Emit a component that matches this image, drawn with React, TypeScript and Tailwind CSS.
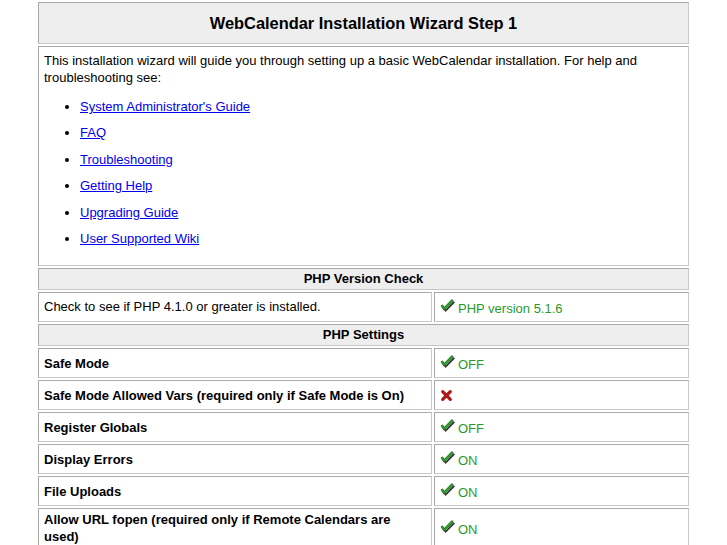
import React from "react";

function Check() {
  return (
    <svg width="15" height="14" viewBox="0 0 15 14" className="inline-block shrink-0 -mt-[3px]">
      <path d="M1.5 7.5 L4.5 12 L14 2.5 L12.5 1.3 L4.6 9.4 L3.2 6.6 Z" fill="#333" transform="translate(1 1)" />
      <path d="M1 6.8 L4 11.2 L13.3 1.8 L11.8 0.6 L4.1 8.6 L2.7 5.9 Z" fill="#22b422" stroke="#0a4f0a" strokeWidth="0.7" strokeLinejoin="round" />
    </svg>
  );
}

function Cross() {
  return (
    <svg width="13" height="13" viewBox="0 0 12 12" className="inline-block shrink-0">
      <path d="M2.5 2.5 L9.5 9.5 M9.5 2.5 L2.5 9.5" stroke="#b01818" strokeWidth="3" strokeLinecap="round" />
    </svg>
  );
}

const cell = "border border-t-[#a8a8a8] border-l-[#a8a8a8] border-r-[#c8c8c8] border-b-[#c8c8c8]";

function Section({ title }: { title: string }) {
  return (
    <div className={`${cell} col-span-2 bg-[#eeeeee] h-[22px] flex items-center justify-center font-bold`}>
      {title}
    </div>
  );
}

function Row({ label, ok, value, tall }: { label: string; ok: boolean; value?: string; tall?: boolean }) {
  return (
    <>
      <div className={`${cell} ${tall ? "h-[40px]" : "h-[30px]"} flex items-center px-[5px] font-bold leading-[17px]`}>
        {label}
      </div>
      <div className={`${cell} flex items-center gap-[3px] px-[5px]`}>
        {ok ? <Check /> : <Cross />}
        {value && <span className="text-[#2a9a2a] mt-[4px]">{value}</span>}
      </div>
    </>
  );
}

const links = [
  "System Administrator's Guide",
  "FAQ",
  "Troubleshooting",
  "Getting Help",
  "Upgrading Guide",
  "User Supported Wiki",
];

export default function App() {
  return (
    <div className="min-h-[545px] bg-white pt-[2px] text-[13px] text-black" style={{ fontFamily: '"Liberation Sans", Arial, sans-serif' }}>
      <div className="ml-[38px] w-[651px] grid grid-cols-[394px_255px] gap-[2px]">
        <div className={`${cell} col-span-2 bg-[#eeeeee] h-[42px] flex items-center justify-center font-bold text-[16.4px]`}>
          WebCalendar Installation Wizard Step 1
        </div>
        <div className={`${cell} col-span-2 h-[220px] px-[5px] pt-[5px] leading-[17px]`}>
          <p>
            This installation wizard will guide you through setting up a basic WebCalendar installation. For help and
            troubleshooting see:
          </p>
          <ul className="list-disc pl-[36px] mt-[12px] flex flex-col gap-[9.4px]">
            {links.map((l) => (
              <li key={l}>
                <a href="#" className="text-[#0000ee] underline">{l}</a>
              </li>
            ))}
          </ul>
        </div>
        <Section title="PHP Version Check" />
        <div className={`${cell} h-[30px] flex items-center px-[5px]`}>Check to see if PHP 4.1.0 or greater is installed.</div>
        <div className={`${cell} flex items-center gap-[3px] px-[5px]`}>
          <Check />
          <span className="text-[#2a9a2a] mt-[4px]">PHP version 5.1.6</span>
        </div>
        <Section title="PHP Settings" />
        <Row label="Safe Mode" ok value="OFF" />
        <Row label="Safe Mode Allowed Vars (required only if Safe Mode is On)" ok={false} />
        <Row label="Register Globals" ok value="OFF" />
        <Row label="Display Errors" ok value="ON" />
        <Row label="File Uploads" ok value="ON" />
        <Row label="Allow URL fopen (required only if Remote Calendars are used)" ok value="ON" tall />
      </div>
    </div>
  );
}
